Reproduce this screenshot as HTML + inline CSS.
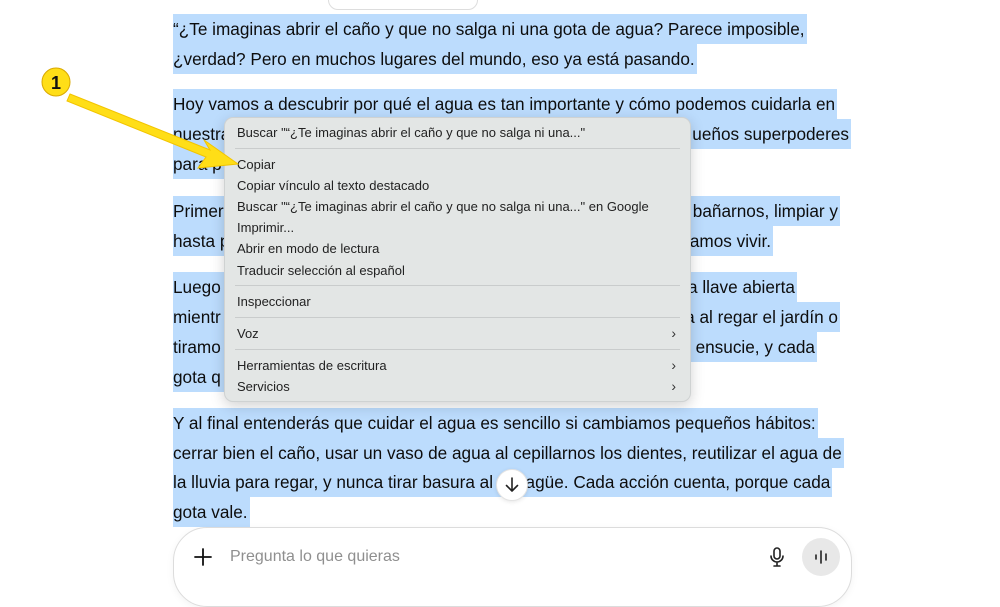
<!DOCTYPE html>
<html><head><meta charset="utf-8"><style>
*{margin:0;padding:0;box-sizing:border-box}
body{width:1000px;height:583px;overflow:hidden;background:#fff;font-family:"Liberation Sans",sans-serif;position:relative;color:#0d0d0d}
.l{position:absolute;left:173px;height:30px;line-height:30px;font-size:17.2px;background:#bcdcfd;white-space:nowrap;padding-right:2px}
.r{position:absolute;right:2px;top:0}
.menu{position:absolute;left:224px;top:117px;width:467px;height:285px;background:#e3e6e5;border:1px solid #cfd2d2;border-radius:9px;box-shadow:0 4px 14px rgba(0,0,0,.18);font-size:13px;color:#222}
.mi{position:absolute;left:12px;height:18px;line-height:18px;white-space:nowrap}
.sep{position:absolute;left:10px;right:10px;height:1px;background:#c9cccc}
.ch{position:absolute;right:14px;font-size:14px;color:#333}
</style></head><body>
<div style="position:absolute;left:328px;top:-10px;width:150px;height:20px;border:1px solid #ddd;border-radius:10px;background:#fff"></div>

<div class="l" style="top:14px">“¿Te imaginas abrir el caño y que no salga ni una gota de agua? Parece imposible,</div>
<div class="l" style="top:44px">¿verdad? Pero en muchos lugares del mundo, eso ya está pasando.</div>
<div class="l" style="top:89px">Hoy vamos a descubrir por qué el agua es tan importante y cómo podemos cuidarla en</div>
<div class="l" style="top:119px;width:678px">nuestra vida diaria<span class="r">ueños superpoderes</span></div>
<div class="l" style="top:149px;width:60px">para p</div>
<div class="l" style="top:196px;width:667px">Primer<span class="r">bañarnos, limpiar y</span></div>
<div class="l" style="top:226px;width:600px">hasta p<span class="r">amos vivir.</span></div>
<div class="l" style="top:272px;width:624px">Luego<span class="r">a llave abierta</span></div>
<div class="l" style="top:302px;width:667px">mientr<span class="r">a al regar el jardín o</span></div>
<div class="l" style="top:332px;width:644px">tiramo<span class="r">ensucie, y cada</span></div>
<div class="l" style="top:362px;width:60px">gota q</div>
<div class="l" style="top:408px">Y al final entenderás que cuidar el agua es sencillo si cambiamos pequeños hábitos:</div>
<div class="l" style="top:438px">cerrar bien el caño, usar un vaso de agua al cepillarnos los dientes, reutilizar el agua de</div>
<div class="l" style="top:467px">la lluvia para regar, y nunca tirar basura al desagüe. Cada acción cuenta, porque cada</div>
<div class="l" style="top:497px">gota vale.</div>

<div class="menu">
<div class="mi" style="top:6px">Buscar "“¿Te imaginas abrir el caño y que no salga ni una..."</div>
<div class="sep" style="top:30px"></div>
<div class="mi" style="top:38px">Copiar</div>
<div class="mi" style="top:59px">Copiar vínculo al texto destacado</div>
<div class="mi" style="top:80px">Buscar "“¿Te imaginas abrir el caño y que no salga ni una..." en Google</div>
<div class="mi" style="top:101px">Imprimir...</div>
<div class="mi" style="top:122px">Abrir en modo de lectura</div>
<div class="mi" style="top:144px">Traducir selección al español</div>
<div class="sep" style="top:167px"></div>
<div class="mi" style="top:175px">Inspeccionar</div>
<div class="sep" style="top:199px"></div>
<div class="mi" style="top:207px">Voz</div><div class="mi ch" style="top:206px;left:auto">›</div>
<div class="sep" style="top:231px"></div>
<div class="mi" style="top:239px">Herramientas de escritura</div><div class="mi ch" style="top:238px;left:auto">›</div>
<div class="mi" style="top:260px">Servicios</div><div class="mi ch" style="top:259px;left:auto">›</div>
</div>

<svg style="position:absolute;left:0;top:0" width="300" height="200">
<polygon points="70,94 210,150 204,140 238,164 198,168 206,157 67,101" fill="#ffde17" stroke="#f2c400" stroke-width="1"/>
<circle cx="56" cy="82" r="14" fill="#ffde17" stroke="#d9a800" stroke-width="1"/>
<text x="56" y="89" text-anchor="middle" font-family="Liberation Sans" font-weight="bold" font-size="18" fill="#111">1</text>
</svg>

<div style="position:absolute;left:496px;top:469px;width:32px;height:32px;border-radius:50%;background:#fff;border:1px solid #e3e3e3;box-shadow:0 1px 4px rgba(0,0,0,.1)">
<svg width="30" height="30" viewBox="0 0 30 30"><path d="M15 8v13M9.5 15.5 15 21l5.5-5.5" fill="none" stroke="#222" stroke-width="1.6" stroke-linecap="round" stroke-linejoin="round"/></svg></div>

<div style="position:absolute;left:173px;top:527px;width:679px;height:80px;border:1px solid #dcdcdc;border-radius:34px;background:#fff;box-shadow:0 2px 8px rgba(0,0,0,.05)"></div>
<svg style="position:absolute;left:193px;top:547px" width="20" height="20"><path d="M10 2v16M2 10h16" stroke="#111" stroke-width="1.8" stroke-linecap="round"/></svg>
<div style="position:absolute;left:230px;top:547px;font-size:16px;color:#8f8f8f;line-height:20px">Pregunta lo que quieras</div>
<svg style="position:absolute;left:767px;top:546px" width="20" height="22" viewBox="0 0 20 22"><rect x="7" y="2" width="6" height="11" rx="3" fill="none" stroke="#222" stroke-width="1.6"/><path d="M4 10a6 6 0 0 0 12 0M10 16v4M7 20h6" fill="none" stroke="#222" stroke-width="1.6" stroke-linecap="round"/></svg>
<div style="position:absolute;left:802px;top:538px;width:38px;height:38px;border-radius:50%;background:#e8e8e8"></div>
<svg style="position:absolute;left:811px;top:547px" width="20" height="20"><path d="M5 8v4M10 4v12M15 7v6" stroke="#222" stroke-width="1.6" stroke-linecap="round"/></svg>
</body></html>
